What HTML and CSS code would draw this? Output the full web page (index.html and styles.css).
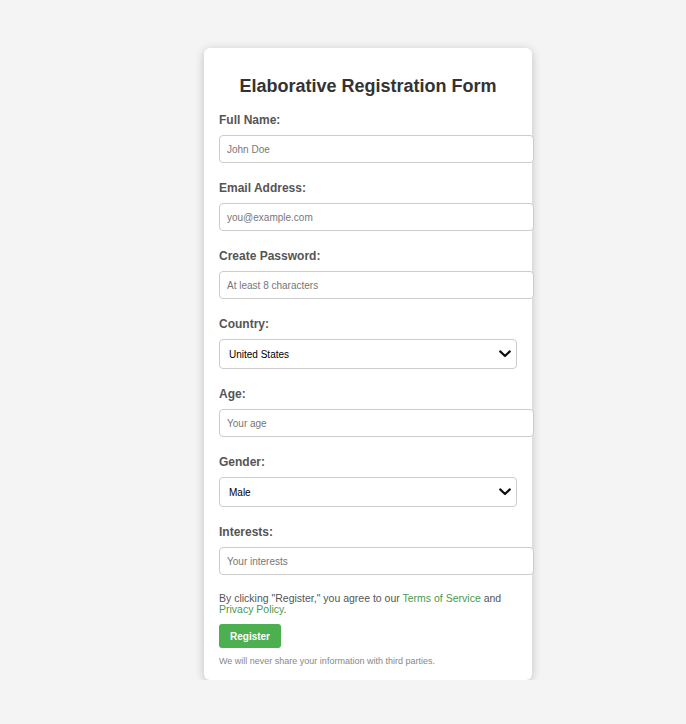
FILE: index.html
```html
<!DOCTYPE html>
<html lang="en">
<head>
<meta charset="utf-8">
<title>Elaborative Registration Form</title>
<link rel="stylesheet" href="styles.css">
</head>
<body>
<div class="page">
  <form class="card">
    <h2 class="title">Elaborative Registration Form</h2>
    <div class="field">
      <label class="label">Full Name:</label>
      <input class="input" type="text" placeholder="John Doe">
    </div>
    <div class="field">
      <label class="label">Email Address:</label>
      <input class="input" type="email" placeholder="you@example.com">
    </div>
    <div class="field">
      <label class="label">Create Password:</label>
      <input class="input" type="password" placeholder="At least 8 characters">
    </div>
    <div class="field">
      <label class="label">Country:</label>
      <div class="select-wrap">
        <select class="select"><option>United States</option></select>
        <svg class="chevron" width="12" height="8" viewBox="0 0 12 8"><path d="M1.2 1.4 L6 6 L10.8 1.4" fill="none" stroke="#111" stroke-width="2.2" stroke-linecap="round" stroke-linejoin="round"/></svg>
      </div>
    </div>
    <div class="field">
      <label class="label">Age:</label>
      <input class="input" type="text" placeholder="Your age">
    </div>
    <div class="field">
      <label class="label">Gender:</label>
      <div class="select-wrap">
        <select class="select"><option>Male</option></select>
        <svg class="chevron" width="12" height="8" viewBox="0 0 12 8"><path d="M1.2 1.4 L6 6 L10.8 1.4" fill="none" stroke="#111" stroke-width="2.2" stroke-linecap="round" stroke-linejoin="round"/></svg>
      </div>
    </div>
    <div class="field">
      <label class="label">Interests:</label>
      <input class="input" type="text" placeholder="Your interests">
    </div>
    <p class="terms">By clicking "Register," you agree to our <a class="link" href="#">Terms of Service</a> and <a class="link" href="#">Privacy Policy</a>.</p>
    <button class="btn" type="button">Register</button>
    <p class="note">We will never share your information with third parties.</p>
  </form>
</div>
</body>
</html>
```
FILE: styles.css
```css
html, body {
  margin: 0;
  padding: 0;
  background: #f4f4f4;
  font-family: "Liberation Sans", Arial, sans-serif;
}
.page {
  display: flex;
  justify-content: center;
  padding: 48px 0 0 50px;
}
.card {
  width: 298px;
  background: #fff;
  border-radius: 6px;
  box-shadow: 0 2px 10px rgba(0, 0, 0, 0.22);
  padding: 22px 15px 13px;
}
.title {
  margin: 6px 0 16px;
  text-align: center;
  font-size: 18px;
  line-height: 21px;
  font-weight: bold;
  color: #333;
}
.field {
  margin-bottom: 18px;
}
.label {
  display: block;
  font-size: 12px;
  line-height: 14px;
  font-weight: bold;
  color: #555;
  margin-bottom: 8px;
}
.input {
  display: block;
  width: 100%;
  height: 26px;
  padding: 0 8px 0 7px;
  margin: 0;
  border: 1px solid #ccc;
  border-radius: 4px;
  font-family: "Liberation Sans", Arial, sans-serif;
  font-size: 10px;
  color: #333;
  background: #fff;
  outline: none;
}
.input::placeholder {
  color: #777;
}
.select-wrap {
  position: relative;
  width: 298px;
}
.select {
  display: block;
  width: 298px;
  height: 30px;
  box-sizing: border-box;
  padding: 0 9px;
  margin: 0;
  border: 1px solid #ccc;
  border-radius: 4px;
  font-family: "Liberation Sans", Arial, sans-serif;
  font-size: 10px;
  color: #000;
  background: #fff;
  appearance: none;
  -webkit-appearance: none;
  outline: none;
}
.chevron {
  position: absolute;
  right: 6px;
  top: 11px;
  pointer-events: none;
}
.terms {
  margin: 0 0 9px;
  font-size: 10.5px;
  line-height: 11px;
  color: #555;
}
.link {
  color: #4a9a4e;
  text-decoration: none;
}
.btn {
  display: block;
  height: 24px;
  width: 62px;
  padding: 0;
  border: none;
  border-radius: 3px;
  background: #4caf50;
  color: #fff;
  font-family: "Liberation Sans", Arial, sans-serif;
  font-size: 10px;
  font-weight: bold;
}
.note {
  margin: 8px 0 0;
  font-size: 9px;
  line-height: 11px;
  color: #888;
}
```
